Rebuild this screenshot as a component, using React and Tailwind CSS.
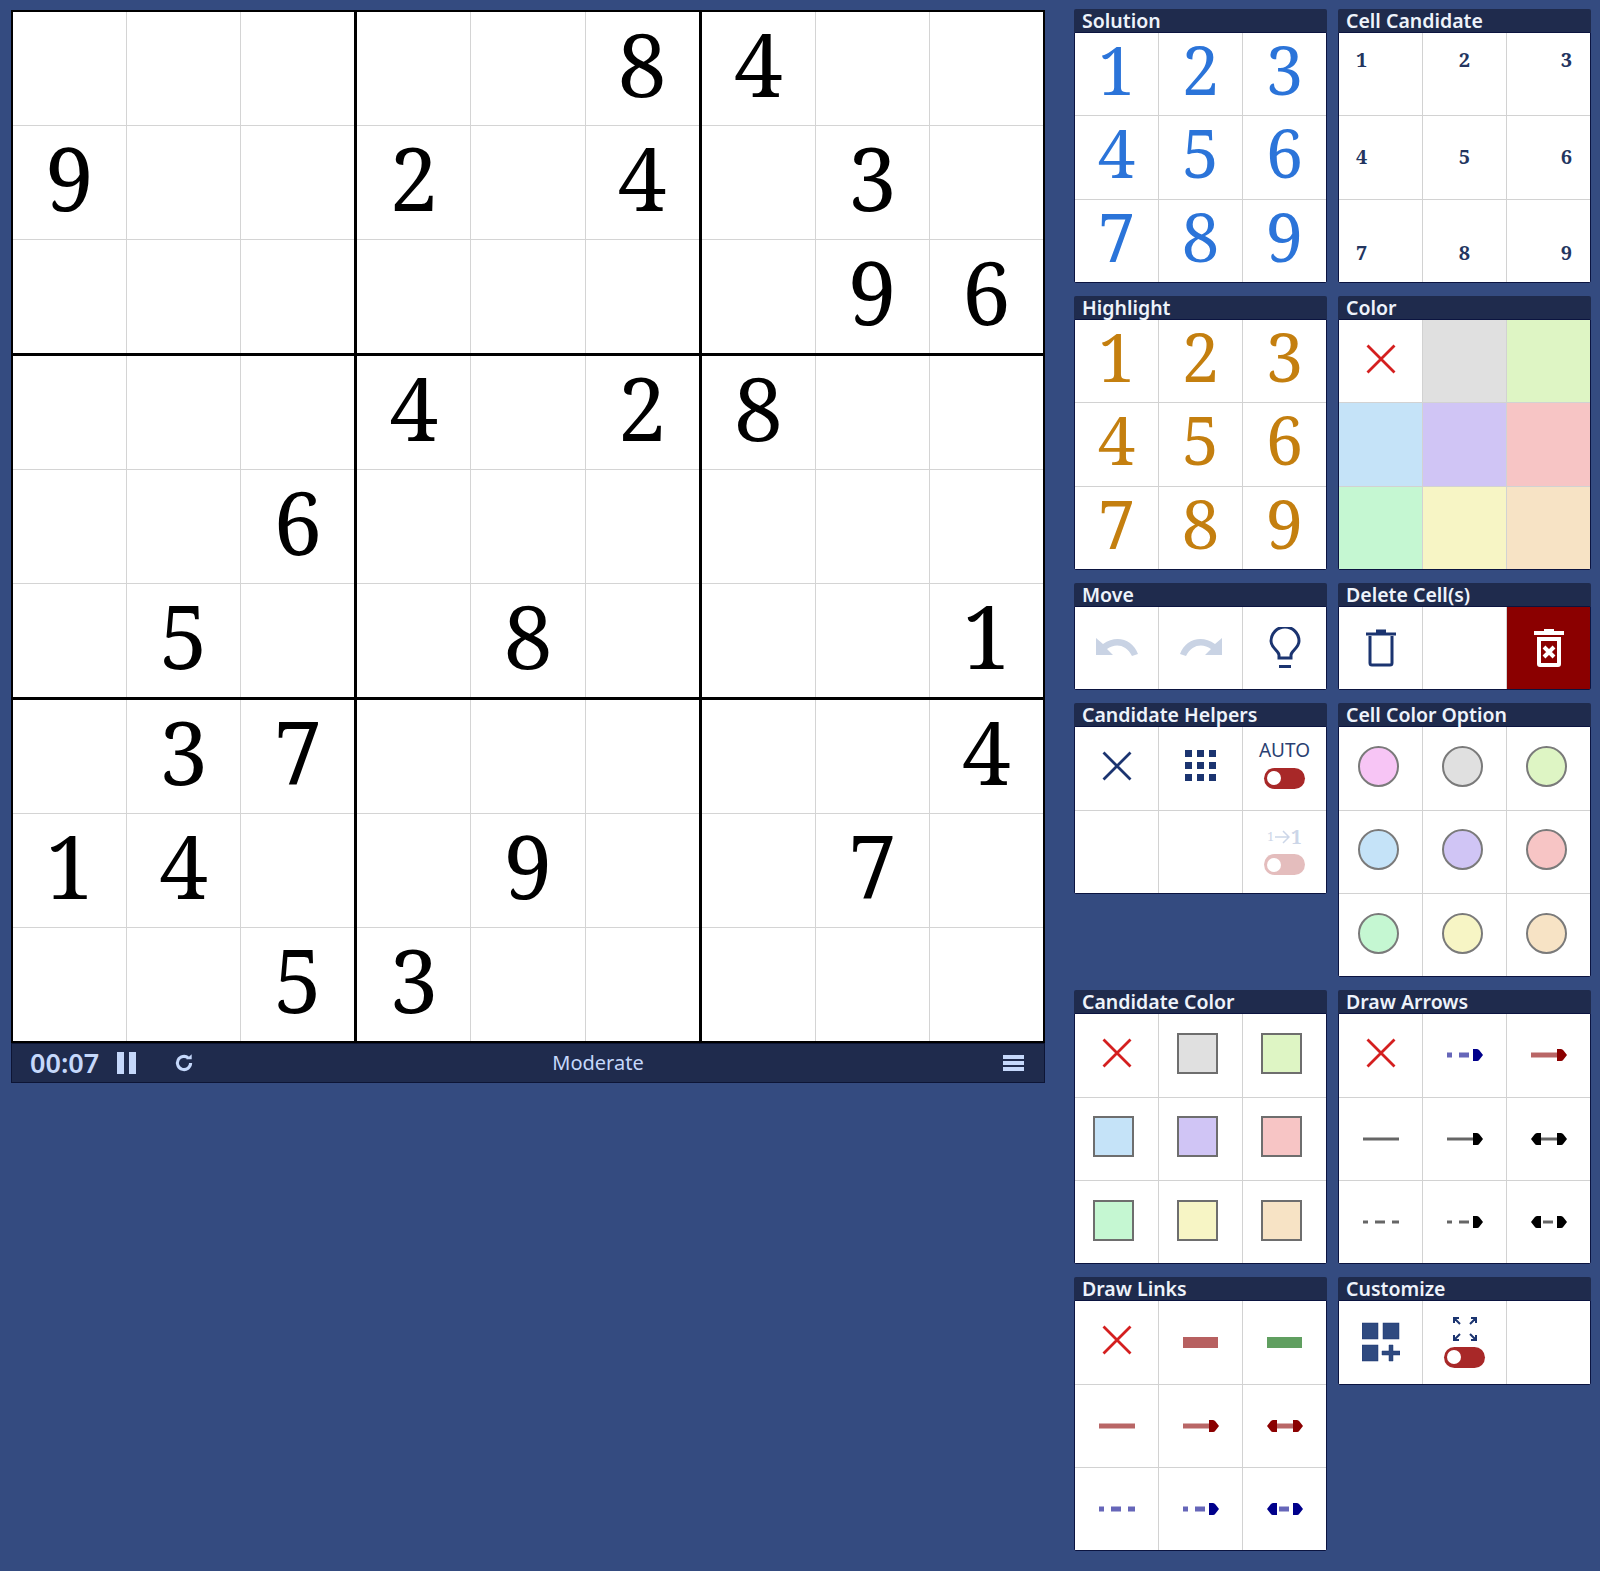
const puzzle = [
  "000008400",
  "900204030",
  "000000096",
  "000402800",
  "006000000",
  "050080001",
  "037000004",
  "140090070",
  "005300000",
];

const swatches = [
  "bg-[#e0e0e0]",
  "bg-[#def5c4]",
  "bg-[#c5e3f8]",
  "bg-[#d0c5f5]",
  "bg-[#f7c5c5]",
  "bg-[#c5f7d2]",
  "bg-[#f7f5c5]",
  "bg-[#f7e3c5]",
];

const digits = [1, 2, 3, 4, 5, 6, 7, 8, 9];

// candidate digits sit towards the corners of the cell
const candidatePlace = [
  "items-start justify-start pt-[15px] pl-[17px]",
  "items-start justify-center pt-[15px]",
  "items-start justify-end pt-[15px] pr-[18px]",
  "items-center justify-start pl-[17px]",
  "items-center justify-center",
  "items-center justify-end pr-[18px]",
  "items-end justify-start pb-[17px] pl-[17px]",
  "items-end justify-center pb-[17px]",
  "items-end justify-end pb-[17px] pr-[18px]",
];

const Board = () => (
  <div className="grid grid-cols-3 gap-[3px] bg-black p-[2px]">
    {[0, 3, 6].map((top) =>
      [0, 3, 6].map((left) => (
        <div key={`${top}-${left}`} className="grid grid-cols-3 gap-px bg-[#d4d4d4]">
          {[0, 1, 2].map((r) =>
            [0, 1, 2].map((c) => {
              const value = puzzle[top + r][left + c];
              return (
                <div
                  key={`${r}-${c}`}
                  className="flex h-[113px] items-center justify-center bg-white pb-[11px] font-['Noto_Serif','DejaVu_Serif',serif] text-[87px] leading-[102px] text-black"
                >
                  {value !== "0" ? value : ""}
                </div>
              );
            })
          )}
        </div>
      ))
    )}
  </div>
);

const GameBar = () => (
  <div className="flex h-[40px] items-center border border-[#0d1535] bg-[#1f2b4d] font-['Noto_Sans',sans-serif] text-[#c5d8fb]">
    <span className="ml-[18px] w-[70px] text-[27px] font-semibold leading-[38px]">00:07</span>
    <div className="ml-[17px] flex gap-[5px]">
      <div className="h-[22px] w-[7px] bg-[#c5d8fb]" />
      <div className="h-[22px] w-[7px] bg-[#c5d8fb]" />
    </div>
    <svg className="ml-[37px]" width="22" height="22" viewBox="0 0 20 20" fill="none" stroke="#c5d8fb" strokeWidth="2.8">
      <path d="M16 10a6 6 0 1 1-2-4.500" />
      <path d="M12 6.500h5V2z" fill="#c5d8fb" stroke="none" />
    </svg>
    <span className="ml-[357px] w-[92px] text-center text-[20px] leading-[38px]">Moderate</span>
    <div className="ml-auto mr-[20px] flex w-[21px] flex-col gap-[2px]">
      <div className="h-[4px] bg-[#c5d8fb]" />
      <div className="h-[4px] bg-[#c5d8fb]" />
      <div className="h-[4px] bg-[#c5d8fb]" />
    </div>
  </div>
);

const Panel = ({ title, cells }) => (
  <div>
    <div className="h-[23px] rounded-t-[2px] bg-[#1f2b4d] pl-[8px] font-['Noto_Sans',sans-serif] text-[19.5px] font-semibold leading-[23px] whitespace-nowrap text-[#eef3fb]">
      {title}
    </div>
    <div className="grid grid-cols-3 gap-px rounded-b-[2px] border border-[#0b1440] bg-[#d2d2d2]">
      {cells.map((cell, i) => (
        <div key={i} className="flex h-[82.33px] items-center justify-center bg-white">
          {cell}
        </div>
      ))}
    </div>
  </div>
);

const BigDigit = ({ value, color }) => (
  <span className={`pb-[10px] font-['Noto_Serif','DejaVu_Serif',serif] text-[67px] leading-[72px] ${color}`}>{value}</span>
);

const Cross = ({ color = "#d41f1f", width = 2.8 }) => (
  <svg className="mb-[5px]" width="30" height="30" viewBox="0 0 30 30" fill="none" stroke={color} strokeWidth={width}>
    <path d="M1.500 1.500l27 27M28.500 1.500l-27 27" />
  </svg>
);

const Toggle = ({ faded = false }) => (
  <div className={`flex h-[21px] w-[41px] items-center rounded-full bg-[#a82828] pl-[3px] ${faded ? "opacity-30" : ""}`}>
    <div className="h-[14px] w-[14px] rounded-full bg-white" />
  </div>
);

// line samples used by Draw Arrows and Draw Links
const Line = ({ stroke, head, opacity = 0.6, height = 5, dashed = false, left = false, right = false }) => (
  <svg width="36" height="14" viewBox="0 0 36 14">
    <line
      x1={left ? 8 : 0}
      x2={right ? 28 : 36}
      y1="7"
      y2="7"
      stroke={stroke}
      strokeOpacity={opacity}
      strokeWidth={height}
      strokeDasharray={dashed ? "10 7" : undefined}
      strokeDashoffset={left ? -4 : 5}
    />
    {right && <path d="M26 1h4q1.500 0 2.500 1.500L36 7l-3.500 4.500Q31.500 13 30 13h-4z" fill={head} />}
    {left && <path d="M10 1H6Q4.500 1 3.500 2.500L0 7l3.500 4.500Q4.500 13 6 13h4z" fill={head} />}
  </svg>
);

const Undo = ({ flip = false }) => (
  <svg width="44" height="26" viewBox="0 0 44 26" fill="#c9d3e4" className={flip ? "-scale-x-100" : ""}>
    <path d="M1 3l0 17 17 0-6-6c8-6 19-5 25 7l6-2C38 5 22-1 8 9z" />
  </svg>
);

const Bulb = () => (
  <svg width="32" height="42" viewBox="0 0 32 42" fill="none" stroke="#1b3470" strokeWidth="3">
    <path d="M10 31v-3c0-4-8-7-8-14a14 14 0 0 1 28 0c0 7-8 10-8 14v3z" />
    <path d="M10 39.500h12" />
  </svg>
);

const Trash = () => (
  <svg width="30" height="38" viewBox="0 0 30 38" fill="none" stroke="#1b3470" strokeWidth="3">
    <path d="M0 5h30M10 2h10" />
    <path d="M4 7v27q0 2 2 2h18q2 0 2-2V7" />
  </svg>
);

const TrashX = () => (
  <svg width="32" height="40" viewBox="0 0 32 40" fill="none">
    <path d="M1 7h30V3H21V1H11v2H1z" fill="#fff" />
    <path d="M4 9h24v27q0 3-3 3H7q-3 0-3-3zm4 4v22h16V13z" fill="#fff" fillRule="evenodd" />
    <path d="M11 19l10 10M21 19L11 29" stroke="#fff" strokeWidth="4" />
  </svg>
);

const DotGrid = () => (
  <div className="mb-[5px] grid grid-cols-3 gap-[5px]">
    {digits.map((d) => (
      <div key={d} className="h-[7px] w-[7px] bg-[#1b3470]" />
    ))}
  </div>
);

const AddTiles = () => (
  <svg width="38" height="40" viewBox="0 0 38 40" fill="#2f4a80" stroke="#1b3470" strokeWidth="0.500">
    <rect x="0" y="1" width="16" height="16" />
    <rect x="21" y="1" width="16" height="16" />
    <rect x="0" y="23" width="16" height="16" />
    <path d="M27 23h4v6h7v4h-7v6h-4v-6h-7v-4h7z" />
  </svg>
);

const Expand = () => (
  <svg width="24" height="24" viewBox="0 0 24 24" fill="none" stroke="#1b3470" strokeWidth="2">
    <path d="M1 6V1h5M1 1l6 6M23 6V1h-5M23 1l-6 6M1 18v5h5M1 23l6-6M23 18v5h-5M23 23l-6-6" />
  </svg>
);

const Stack = ({ children }) => <div className="flex flex-col items-center">{children}</div>;

const BLUE = "#00008b";
const RED = "#8b0000";

const solution = digits.map((d) => <BigDigit key={d} value={d} color="text-[#2b74d9]" />);
const highlight = digits.map((d) => <BigDigit key={d} value={d} color="text-[#c47f0f]" />);

const candidates = digits.map((d) => (
  <span key={d} className="font-['Noto_Serif','DejaVu_Serif',serif] text-[20px] font-bold leading-[24px] text-[#23355f]">
    {d}
  </span>
));

const colorCells = [null, ...swatches].map((s, i) =>
  s ? <div key={i} className={`h-full w-full ${s}`} /> : <Cross key={i} />
);

const circleCells = ["bg-[#f7c5f5]", ...swatches].map((s) => (
  <div key={s} className={`mb-[4px] mr-[4px] h-[41px] w-[41px] rounded-full border-2 border-[#7a7a7a] ${s}`} />
));

const squareCells = [null, ...swatches].map((s, i) =>
  s ? <div key={i} className={`mb-[4px] mr-[6px] h-[41px] w-[41px] border-2 border-[#6e6e6e] ${s}`} /> : <Cross key={i} />
);

const App = () => (
  <div className="flex min-h-[1571px] items-start bg-[#344b80] pl-[11px] pt-[9px]">
    <div className="mt-px w-[1034px]">
      <Board />
      <GameBar />
    </div>
    <div className="ml-[29px] flex w-[517px] flex-col gap-[13px]">
      <div className="grid grid-cols-2 items-start gap-[11px]">
        <Panel title="Solution" cells={solution} />
        <Panel
          title="Cell Candidate"
          cells={candidates.map((c, i) => (
            <div key={i} className={`flex h-full w-full ${candidatePlace[i]}`}>
              {c}
            </div>
          ))}
        />
      </div>
      <div className="grid grid-cols-2 items-start gap-[11px]">
        <Panel title="Highlight" cells={highlight} />
        <Panel title="Color" cells={colorCells} />
      </div>
      <div className="grid grid-cols-2 items-start gap-[11px]">
        <Panel title="Move" cells={[<Undo key="u" />, <Undo key="r" flip />, <Bulb key="b" />]} />
        <Panel
          title="Delete Cell(s)"
          cells={[
            <Trash key="t" />,
            null,
            <div key="x" className="-mx-px flex h-full w-full items-center justify-center bg-[#8b0000]">
              <TrashX />
            </div>,
          ]}
        />
      </div>
      <div className="grid grid-cols-2 items-start gap-[11px]">
        <Panel
          title="Candidate Helpers"
          cells={[
            <Cross key="x" color="#1b3470" />,
            <DotGrid key="g" />,
            <div key="a" className="-mt-[10px]">
              <Stack>
                <span className="mb-[6px] font-['Noto_Sans',sans-serif] text-[19px] leading-[24px] text-[#2b3f72]">AUTO</span>
                <Toggle />
              </Stack>
            </div>,
            null,
            null,
            <div key="o" className="-mt-[3px]">
              <Stack>
                <span className="mb-[5px] flex items-center gap-px font-['Noto_Serif','DejaVu_Serif',serif] leading-[24px] text-[#ccd6e8]">
                  <span className="text-[12px]">1</span>
                  <svg width="15" height="14" viewBox="0 0 15 14" fill="none" stroke="#ccd6e8" strokeWidth="1.500">
                    <path d="M0 7h14M8 1l6 6-6 6" />
                  </svg>
                  <span className="text-[19px] font-bold">1</span>
                </span>
                <Toggle faded />
              </Stack>
            </div>,
          ]}
        />
        <Panel title="Cell Color Option" cells={circleCells} />
      </div>
      <div className="grid grid-cols-2 items-start gap-[11px]">
        <Panel title="Candidate Color" cells={squareCells} />
        <Panel
          title="Draw Arrows"
          cells={[
            <Cross key="x" />,
            <Line key="1" stroke={BLUE} head={BLUE} dashed right />,
            <Line key="2" stroke={RED} head={RED} right />,
            <Line key="3" stroke="#000" height={3} />,
            <Line key="4" stroke="#000" head="#000" height={3} right />,
            <Line key="5" stroke="#000" head="#000" height={3} left right />,
            <Line key="6" stroke="#000" height={3} dashed />,
            <Line key="7" stroke="#000" head="#000" height={3} dashed right />,
            <Line key="8" stroke="#000" head="#000" height={3} dashed left right />,
          ]}
        />
      </div>
      <div className="grid grid-cols-2 items-start gap-[11px]">
        <Panel
          title="Draw Links"
          cells={[
            <Cross key="x" />,
            <div key="r" className="h-[11px] w-[35px] bg-[#b76060]" />,
            <div key="g" className="h-[11px] w-[35px] bg-[#609f60]" />,
            <Line key="1" stroke={RED} />,
            <Line key="2" stroke={RED} head={RED} right />,
            <Line key="3" stroke={RED} head={RED} left right />,
            <Line key="4" stroke={BLUE} dashed />,
            <Line key="5" stroke={BLUE} head={BLUE} dashed right />,
            <Line key="6" stroke={BLUE} head={BLUE} dashed left right />,
          ]}
        />
        <Panel
          title="Customize"
          cells={[
            <AddTiles key="a" />,
            <Stack key="e">
              <div className="mb-[6px]">
                <Expand />
              </div>
              <Toggle />
            </Stack>,
            null,
          ]}
        />
      </div>
    </div>
  </div>
);

export default App;
